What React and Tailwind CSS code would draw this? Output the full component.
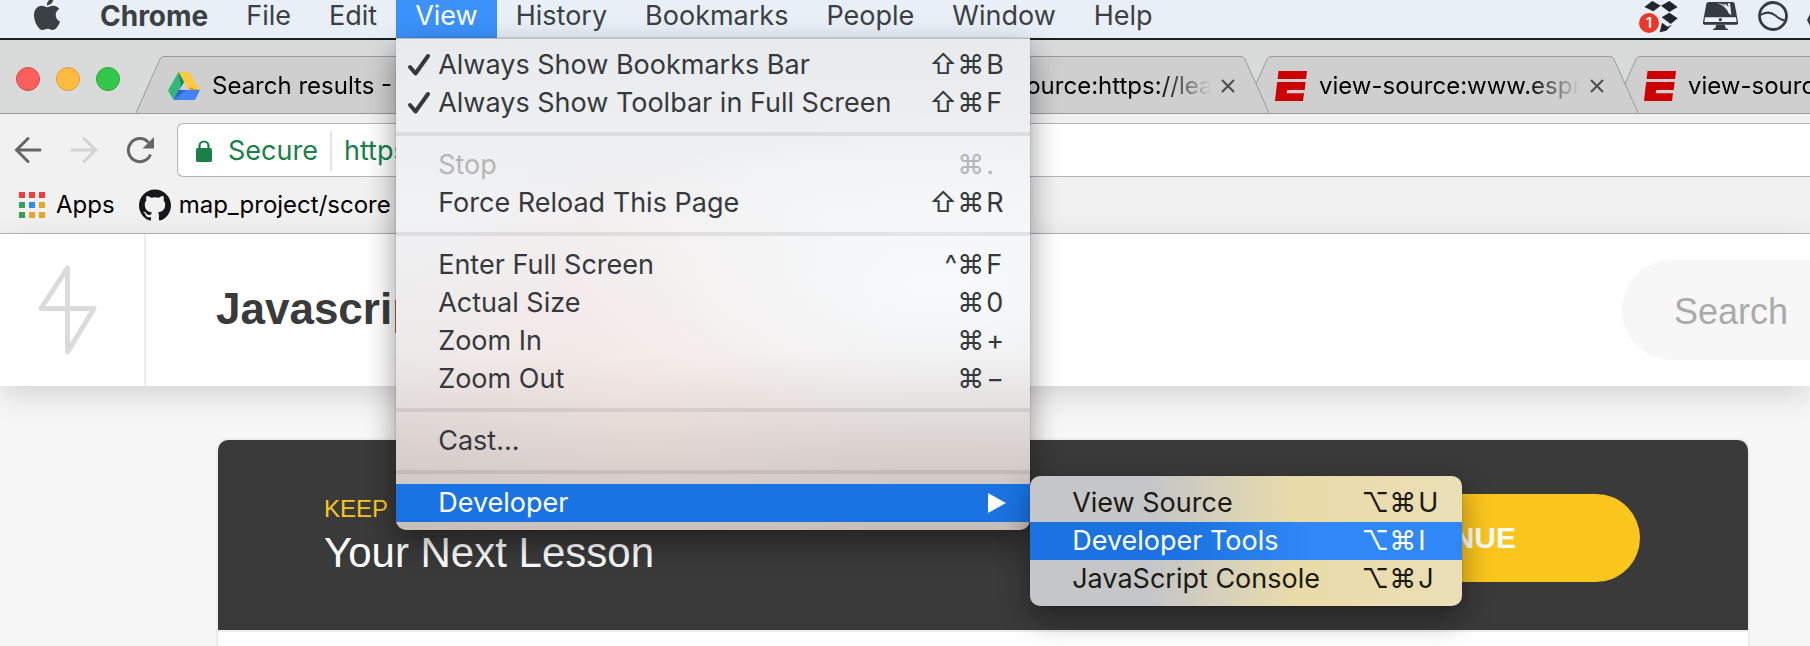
import { SiApple, SiGithub } from "react-icons/si";

const MENUS_BEFORE = ["File", "Edit"];
const MENUS_AFTER = ["History", "Bookmarks", "People", "Window", "Help"];

const VIEW_GROUPS = [
  [
    { label: "Always Show Bookmarks Bar", mods: "⇧⌘", char: "B", checked: true },
    { label: "Always Show Toolbar in Full Screen", mods: "⇧⌘", char: "F", checked: true },
  ],
  [
    { label: "Stop", mods: "⌘", char: ".", disabled: true },
    { label: "Force Reload This Page", mods: "⇧⌘", char: "R" },
  ],
  [
    { label: "Enter Full Screen", mods: "^⌘", char: "F" },
    { label: "Actual Size", mods: "⌘", char: "0" },
    { label: "Zoom In", mods: "⌘", char: "+" },
    { label: "Zoom Out", mods: "⌘", char: "−" },
  ],
  [{ label: "Cast..." }],
];

const DEVELOPER_ITEMS = [
  { label: "View Source", mods: "⌥⌘", char: "U" },
  { label: "Developer Tools", mods: "⌥⌘", char: "I", active: true },
  { label: "JavaScript Console", mods: "⌥⌘", char: "J" },
];

const TABS = [
  { title: "Search results - Google Drive", icon: "drive" },
  { title: "view-source:https://learn", icon: "page" },
  { title: "view-source:https://learn", icon: "page" },
  { title: "view-source:www.espn.com", icon: "espn" },
  { title: "view-source:www.espn.com", icon: "espn" },
];

function CheckMark() {
  return (
    <svg viewBox="0 0 24 24" className="h-6 w-6" fill="none" stroke="currentColor" strokeWidth="4" strokeLinecap="round" strokeLinejoin="round" aria-hidden="true">
      <path d="M3 14 8.5 20.5 21 3" />
    </svg>
  );
}

function Shortcut({ mods, char }) {
  return (
    <span className="flex">
      <span>{mods}</span>
      <span className="ml-0.5 w-[26px] text-left">{char}</span>
    </span>
  );
}

function MenuRow({ item }) {
  const tone = item.active ? "bg-linear-to-r from-[#1a73e0] from-35% to-[#2f88f5] to-65% text-white" : item.disabled ? "text-[#b4b6b8]" : "";
  return (
    <li role="none">
      <button role="menuitem" disabled={item.disabled} className={`flex h-[38px] w-full items-center pr-[18px] text-left whitespace-nowrap ${tone}`}>
        <span className="flex w-[42px] shrink-0 justify-center pl-1">{item.checked && <CheckMark />}</span>
        <span className="flex-1">{item.label}</span>
        {item.mods && <Shortcut mods={item.mods} char={item.char} />}
      </button>
    </li>
  );
}

function DeveloperMenu() {
  return (
    <ul role="menu" aria-label="Developer" className="absolute -top-2 left-full w-[432px] rounded-[10px] bg-linear-to-r from-[#c4c6c8] from-28% via-[#e9dca9] via-62% to-[#eadfb6] py-2 text-[#1c1a12] shadow-[0_12px_30px_rgba(0,0,0,0.4),0_0_1px_rgba(0,0,0,0.6)]">
      {DEVELOPER_ITEMS.map((item) => (
        <MenuRow key={item.label} item={item} />
      ))}
    </ul>
  );
}

function ViewMenu() {
  return (
    <ul role="menu" aria-label="View" className="absolute top-full left-0 w-[634px] rounded-b-[10px] border-t border-[#b9bcc0] bg-[linear-gradient(to_bottom,transparent_64%,rgba(120,98,88,0.28)_100%),radial-gradient(ellipse_at_85%_50%,#f7fafb_0%,transparent_50%),radial-gradient(ellipse_at_40%_72%,#f6eae7_0%,transparent_50%),linear-gradient(to_bottom,#e8ebed_0%,#f1f2f4_35%,#ece9e9_65%,#e6e1df_100%)] pt-[7px] pb-2 text-[#36393b] shadow-[0_12px_30px_rgba(0,0,0,0.42),0_0_1px_rgba(0,0,0,0.8)]">
      {VIEW_GROUPS.map((group, index) => (
        <li key={index} role="none">
          <ul role="group">
            {group.map((item) => (
              <MenuRow key={item.label} item={item} />
            ))}
          </ul>
          <hr className="my-2.5 h-1 border-0 bg-black/8" />
        </li>
      ))}
      <li role="none" className="relative">
        <button role="menuitem" aria-haspopup="menu" aria-expanded="true" className="flex h-[38px] w-full items-center justify-between bg-[#1a73e2] pr-6 pl-[42px] text-white">
          Developer
          <svg viewBox="0 0 18 20" className="h-5 w-[18px]" fill="currentColor" aria-hidden="true">
            <path d="M0 0 18 10 0 20z" />
          </svg>
        </button>
        <DeveloperMenu />
      </li>
    </ul>
  );
}

function MenuTitle({ children, className = "" }) {
  return <button className={`h-[38px] px-[19px] pb-1.5 ${className}`}>{children}</button>;
}

function DropboxStatus() {
  return (
    <svg viewBox="27 0 120 99" className="mr-1.5 h-[33px] w-10" aria-label="Dropbox, 1 notification" role="img">
      <g fill="#20262c">
        <path d="M43 21 67 3 92 17 70 34zM93 17 118 3 143 21 118 36zM95 52 118 38 143 55 122 72z" />
        <path d="M96 68 113 80 126 74 109 92 89 97z" />
      </g>
      <circle cx="57" cy="69" r="30" fill="#ea3728" />
      <text x="57" y="85" textAnchor="middle" fontSize="45" fontWeight="600" fontFamily="Inter, sans-serif" fill="#fff">1</text>
    </svg>
  );
}

function CleanerStatus() {
  return (
    <svg viewBox="219 0 108 93" className="h-[31px] w-9" aria-label="Cleaner" role="img">
      <path d="M236 6H308Q313 6 314 11L324 66V70Q324 74 320 74H223Q219 74 219 70V66L229 11Q230 6 236 6z" fill="#353b42" />
      <path d="M225 52H318L320 66H223z" fill="#eef3f9" />
      <circle cx="271" cy="59" r="5" fill="#353b42" />
      <path d="M259 74H284L287 84 294 87V90H249V87L256 84z" fill="#353b42" />
      <path d="M262 9Q286 12 292 26L280 9Q292 14 296 22L293 10H300L304 46 296 40Q290 20 262 9z" fill="#eef3f9" />
    </svg>
  );
}

function RingStatus() {
  return (
    <svg viewBox="0 0 32 32" className="h-8 w-8" fill="none" stroke="#353b42" strokeWidth="2.800" aria-label="Network" role="img">
      <circle cx="16" cy="16" r="13.500" />
      <path d="M3.500 15q8-5 15 .5 5 4.500 9 5" strokeWidth="2" />
    </svg>
  );
}

function MenuBar() {
  return (
    <header className="relative z-20 flex h-10 items-start justify-between border-b-2 border-[#18201f] bg-[#e9eff7] text-[27px] leading-8 text-[#3b4043]">
      <nav aria-label="Menu bar" className="flex shrink-0">
        <button aria-label="Apple" className="flex h-[38px] w-[81px] justify-end pr-[18px]">
          <SiApple className="-mt-0.5 h-8 w-8" />
        </button>
        <MenuTitle className="text-[28px] font-bold">Chrome</MenuTitle>
        {MENUS_BEFORE.map((name) => (
          <MenuTitle key={name}>{name}</MenuTitle>
        ))}
        <div className="relative">
          <MenuTitle className="bg-[#3b92fb] text-white">View</MenuTitle>
          <ViewMenu />
        </div>
        {MENUS_AFTER.map((name) => (
          <MenuTitle key={name}>{name}</MenuTitle>
        ))}
      </nav>
      <div className="flex items-start gap-[18px]">
        <DropboxStatus />
        <CleanerStatus />
        <RingStatus />
        <svg viewBox="0 0 3 32" className="h-8 w-[3px]" fill="#353b42" aria-hidden="true">
          <path d="M3 14 0 20l3 6z" />
        </svg>
      </div>
    </header>
  );
}

function TabIcon({ kind }) {
  if (kind === "drive") {
    return (
      <svg viewBox="0 0 32 28" className="h-7 w-8" aria-hidden="true">
        <path d="M10.500 0 16 10 5.500 28 0 18.500z" fill="#33b679" />
        <path d="M10.500 0h10.500L32 18H21.500z" fill="#fdc93f" />
        <path d="M10.800 18H32l-5 10H5.500z" fill="#4284f4" />
        <path d="M10.500 0 16 10l-3 5z" fill="#1f8b52" />
        <path d="M21 15.500 32 18H21.500z" fill="#d8962b" />
        <path d="M5.500 28 10.800 18H18z" fill="#2f62cf" />
      </svg>
    );
  }
  if (kind === "espn") {
    return (
      <svg viewBox="0 0 32 30" className="h-[30px] w-8" fill="#cc0000" aria-hidden="true">
        <path d="M3.500 0H32l-.9 8H2.600z" />
        <path d="M2.200 11H30.600L29.700 19H12.200L11.600 22.300H29L28 30H0z" />
      </svg>
    );
  }
  return <span className="h-[30px] w-8 rounded-sm bg-white" />;
}

function Tab({ tab, order }) {
  return (
    <li className="relative h-[57px] w-[369px] shrink-0" style={{ zIndex: order }}>
      <svg viewBox="0 0 395 57" className="absolute top-0 left-0 h-[57px] w-[395px]" fill="#cfcfcf" stroke="#989a9b" aria-hidden="true">
        <path d="M0 57 24 3Q25.500.5 28 .500H367Q369.500.5 371 3L395 57" />
      </svg>
      <div className="relative flex h-full items-center pt-0.5 pl-8">
        <TabIcon kind={tab.icon} />
        <span className="ml-3 w-[261px] overflow-hidden mask-r-from-80% whitespace-nowrap text-black">{tab.title}</span>
        <button aria-label="Close tab" className="ml-2.5 text-[#505153]">
          <svg viewBox="0 0 14 14" className="h-3.5 w-3.5" fill="none" stroke="currentColor" strokeWidth="2.200" aria-hidden="true">
            <path d="m1 1 12 12M13 1 1 13" />
          </svg>
        </button>
      </div>
    </li>
  );
}

function TabStrip() {
  return (
    <div className="flex h-[74px] items-end overflow-hidden border-b border-[#989a9b] bg-[#d9dbdb] text-2xl">
      <div className="flex w-[136px] shrink-0 gap-4 self-center pt-1 pl-4">
        <button aria-label="Close" className="h-6 w-6 rounded-full border border-[#df4744] bg-[#fc605c]" />
        <button aria-label="Minimize" className="h-6 w-6 rounded-full border border-[#de9f34] bg-[#fdbc40]" />
        <button aria-label="Zoom" className="h-6 w-6 rounded-full border border-[#27a833] bg-[#34c84a]" />
      </div>
      <ul className="relative z-0 flex">
        {TABS.map((tab, index) => (
          <Tab key={index} tab={tab} order={TABS.length - index} />
        ))}
      </ul>
    </div>
  );
}

function ArrowIcon({ className = "" }) {
  return (
    <svg viewBox="0 0 28 28" className={`h-7 w-7 ${className}`} fill="none" stroke="currentColor" strokeWidth="3" strokeLinecap="round" aria-hidden="true">
      <path d="M26 14H3M14 2.500 2.500 14 14 25.500" strokeLinejoin="miter" />
    </svg>
  );
}

function AddressRow() {
  return (
    <div className="flex h-[54px] items-center">
      <div className="flex w-[177px] shrink-0 items-center pl-3.5 text-[#666]">
        <button aria-label="Back" className="mr-7">
          <ArrowIcon />
        </button>
        <button aria-label="Forward" className="mr-7 text-[#d3d3d3]">
          <ArrowIcon className="rotate-180" />
        </button>
        <button aria-label="Reload">
          <svg viewBox="0 0 28 28" className="h-7 w-7" aria-hidden="true">
            <path d="M24.500 18.500A11.500 11.500 0 1 1 22.500 6.500" fill="none" stroke="currentColor" strokeWidth="3" />
            <path d="M28 1v11.500H16.500z" fill="currentColor" />
          </svg>
        </button>
      </div>
      <div className="flex h-[54px] flex-1 items-center rounded-l-md border border-r-0 border-[#b3b4b5] bg-white pt-0.5 pl-[18px] text-[27px] text-[#188147]">
        <svg viewBox="0 0 16 22" className="h-[22px] w-4" aria-hidden="true">
          <path d="M3.500 9V6a4.500 4.500 0 0 1 9 0v3" fill="none" stroke="currentColor" strokeWidth="2.200" />
          <rect y="8" width="16" height="14" rx="1.500" fill="currentColor" />
        </svg>
        <span className="ml-4">Secure</span>
        <span className="mx-3 h-10 w-0.5 bg-[#e5e5e5]" />
        <input aria-label="Address" defaultValue="https://learn.firstdraft.com" className="min-w-0 flex-1 outline-none" />
      </div>
    </div>
  );
}

const APP_DOTS = [
  "bg-[#f33b3b]", "bg-[#f33b3b]", "bg-[#f33b3b]",
  "bg-[#36a05a]", "bg-[#2b8cf5]", "bg-[#f0a225]",
  "bg-[#36a05a]", "bg-[#f0a225]", "bg-[#f0a225]",
];

function BookmarksBar() {
  return (
    <nav aria-label="Bookmarks" className="flex items-center pt-3 pl-[19px] text-2xl text-black">
      <a href="#apps" className="flex items-center gap-[11px]">
        <span className="grid grid-cols-3 gap-1">
          {APP_DOTS.map((color, index) => (
            <span key={index} className={`h-1.5 w-1.5 ${color}`} />
          ))}
        </span>
        Apps
      </a>
      <a href="#score" className="ml-6 flex items-center gap-2">
        <SiGithub className="h-8 w-8 text-[#17171a]" />
        map_project/score
      </a>
    </nav>
  );
}

function SiteHeader() {
  return (
    <div className="relative flex h-[152px] items-stretch bg-white font-[Liberation_Sans,sans-serif] shadow-[0_10px_30px_rgba(0,0,0,0.14)]">
      <a href="#home" aria-label="Home" className="flex w-[146px] shrink-0 items-center border-r-2 border-[#eee] pl-[38px]">
        <svg viewBox="0 0 60 90" className="h-[90px] w-[60px]" fill="none" stroke="#dbdbdb" strokeWidth="5" strokeLinejoin="round" aria-hidden="true">
          <path d="M29.500 3v84L56 43.500H3z" />
        </svg>
      </a>
      <h1 className="flex flex-1 items-center pb-0.5 pl-[70px] text-[44px] font-bold text-[#3a3a3a]">Javascript</h1>
      <div className="flex items-center">
        <input type="text" aria-label="Search" placeholder="Search" className="h-[100px] w-[188px] rounded-l-full bg-[#f7f7f7] pt-1 pl-[52px] text-4xl outline-none placeholder:text-[#aaa]" />
      </div>
    </div>
  );
}

function LessonCard() {
  return (
    <main className="px-[60px] pt-[52px] pl-[216px] font-[Liberation_Sans,sans-serif]">
      <section className="overflow-hidden rounded-t-xl border-2 border-b-0 border-[#eee] bg-white">
        <div className="flex h-[190px] items-center justify-between bg-[#3a3a3a] pt-1.5 pr-[108px] pl-[106px]">
          <div className="pb-1">
            <p className="mb-0.5 text-2xl text-[#fac51c]">KEEP LEARNING</p>
            <h2 className="text-[42px] leading-[52px] text-white">Your Next Lesson</h2>
          </div>
          <button className="h-[88px] rounded-full bg-[#fac51c] px-[124px] text-3xl font-bold text-white">CONTINUE</button>
        </div>
        <div className="h-4 border-t-2 border-[#eee]" />
      </section>
    </main>
  );
}

export default function App() {
  return (
    <div className="min-h-screen overflow-hidden bg-[#f7f7f7] font-[Inter,sans-serif]">
      <MenuBar />
      <TabStrip />
      <div className="h-[120px] border-b border-[#b3b4b5] bg-[#f1f1f1] pt-[9px]">
        <AddressRow />
        <BookmarksBar />
      </div>
      <SiteHeader />
      <LessonCard />
    </div>
  );
}
